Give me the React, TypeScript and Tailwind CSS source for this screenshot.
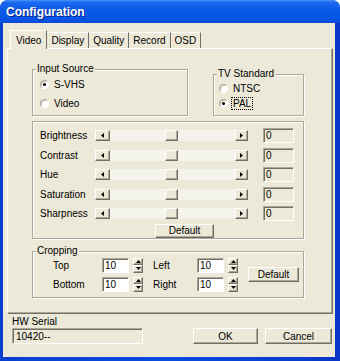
import React from 'react';

const raised =
  'border border-t-white border-l-white border-r-[#716F64] border-b-[#716F64] shadow-[inset_-1px_-1px_0_#ACA899]';
const sunken =
  'border border-t-[#ACA899] border-l-[#ACA899] border-r-white border-b-white shadow-[inset_1px_1px_0_#716F64]';

const Tri: React.FC<{ dir: 'left' | 'right' | 'up' | 'down' }> = ({ dir }) => {
  const pts = {
    left: '3,0 3,5 0,2.5',
    right: '0,0 0,5 3,2.5',
    up: '0,3 5,3 2.5,0',
    down: '0,0 5,0 2.5,3',
  }[dir];
  const horiz = dir === 'left' || dir === 'right';
  return (
    <svg width={horiz ? 3 : 5} height={horiz ? 5 : 3} viewBox={horiz ? '0 0 3 5' : '0 0 5 3'}>
      <polygon points={pts} fill="#000" />
    </svg>
  );
};

const Group: React.FC<{ label?: string; className?: string; children: React.ReactNode }> = ({
  label,
  className,
  children,
}) => (
  <div
    className={`relative border border-[#ACA899] shadow-[inset_1px_1px_0_#fff,1px_1px_0_#fff] ${className ?? ''}`}
  >
    {label && (
      <span className="absolute -top-[7px] left-[3px] bg-[#ECE9D8] px-[1px] leading-[12px]">{label}</span>
    )}
    {children}
  </div>
);

const Radio: React.FC<{ checked?: boolean }> = ({ checked }) => (
  <span className="flex h-[9px] w-[9px] items-center justify-center rounded-full border border-[#ACA899] border-r-white border-b-white bg-white shadow-[inset_1px_1px_0_#c9c6b8]">
    {checked && <span className="h-[3px] w-[3px] rounded-full bg-black" />}
  </span>
);

const Button: React.FC<{ label: string; className?: string }> = ({ label, className }) => (
  <div className={`flex items-center justify-center bg-[#ECE9D8] ${raised} ${className ?? ''}`}>{label}</div>
);

const Slider: React.FC = () => (
  <div className="flex h-[11px] w-[153px] bg-[#F4F3EC]">
    <div className={`flex w-[15px] items-center justify-center bg-[#ECE9D8] ${raised}`}>
      <Tri dir="left" />
    </div>
    <div className="w-[55px]" />
    <div className={`w-[13px] bg-[#ECE9D8] ${raised}`} />
    <div className="flex-1" />
    <div className={`flex w-[13px] items-center justify-center bg-[#ECE9D8] ${raised}`}>
      <Tri dir="right" />
    </div>
  </div>
);

const Spin: React.FC = () => (
  <div className="flex h-[15px] w-[10px] flex-col">
    <div className={`flex flex-1 items-center justify-center bg-[#ECE9D8] ${raised}`}>
      <Tri dir="up" />
    </div>
    <div className={`flex flex-1 items-center justify-center bg-[#ECE9D8] ${raised}`}>
      <Tri dir="down" />
    </div>
  </div>
);

const sliders = ['Brightness', 'Contrast', 'Hue', 'Saturation', 'Sharpness'];
const tabs = ['Video', 'Display', 'Quality', 'Record', 'OSD'];

const CropRow: React.FC<{ a: string; b: string }> = ({ a, b }) => (
  <div className="flex h-[19px] items-center">
    <span className="w-[49px]">{a}</span>
    <div className={`flex h-[15px] w-[27px] items-center bg-white pl-[2px] ${sunken}`}>10</div>
    <div className="ml-[4px]">
      <Spin />
    </div>
    <span className="ml-[10px] w-[44px]">{b}</span>
    <div className={`flex h-[15px] w-[27px] items-center bg-white pl-[2px] ${sunken}`}>10</div>
    <div className="ml-[4px]">
      <Spin />
    </div>
  </div>
);

export default function App() {
  return (
    <div className="h-[361px] w-[340px] bg-white font-['Liberation_Sans',Arial,sans-serif] text-[10px] text-black">
      <div className="flex h-full w-full flex-col overflow-hidden rounded-t-[8px] bg-[linear-gradient(to_right,#0A3FD0,#0B4BE0_50%,#0836C8)]">
        {/* title bar */}
        <div className="flex h-[23px] shrink-0 items-center bg-[linear-gradient(to_bottom,#4A94FF_0%,#1C68F0_10%,#0A5AE8_45%,#0656E6_80%,#0B4AD4_100%)] pl-[6px]">
          <span className="text-[12px] font-bold text-white [text-shadow:1px_1px_0_#0A1E8A]">Configuration</span>
        </div>

        {/* body */}
        <div className="mb-[4px] ml-[3px] mr-[5px] flex flex-1 flex-col bg-[#ECE9D8]">
          {/* tabs */}
          <div className="flex h-[25px] items-end pl-[7px] pt-[7px]">
            {tabs.map((t, i) =>
              i === 0 ? (
                <div
                  key={t}
                  className="relative z-10 -mb-px flex h-[19px] items-center border-l border-t border-r border-l-white border-t-white border-r-[#716F64] bg-[#ECE9D8] px-[5px]"
                >
                  {t}
                </div>
              ) : (
                <div
                  key={t}
                  className="flex h-[16px] items-center border-t border-r border-t-white border-r-[#716F64] px-[4px]"
                >
                  {t}
                </div>
              ),
            )}
          </div>

          {/* tab pane */}
          <div className="ml-[4px] mr-[2px] h-[266px] border border-t-white border-l-white border-r-[#716F64] border-b-[#716F64] shadow-[inset_-1px_-1px_0_#ACA899] pl-[24px]">
            <div className="flex items-start">
              <Group label="Input Source" className="mt-[20px] h-[47px] w-[156px] pl-[7px] pt-[5px]">
                <div className="flex h-[19px] items-center gap-[5px]">
                  <Radio checked />
                  <span>S-VHS</span>
                </div>
                <div className="flex h-[19px] items-center gap-[5px]">
                  <Radio />
                  <span>Video</span>
                </div>
              </Group>
              <Group label="TV Standard" className="ml-[25px] mt-[25px] h-[42px] w-[91px] pl-[5px] pt-[6px]">
                <div className="flex h-[15px] items-center gap-[5px]">
                  <Radio />
                  <span>NTSC</span>
                </div>
                <div className="flex h-[15px] items-center gap-[3px]">
                  <Radio checked />
                  <span className="border border-dotted border-black px-[1px] leading-[11px]">PAL</span>
                </div>
              </Group>
            </div>

            <Group className="mt-[5px] h-[118px] w-[272px] pl-[7px] pt-[4px]">
              {sliders.map((s) => (
                <div key={s} className="flex h-[19.5px] items-center">
                  <span className="w-[55px]">{s}</span>
                  <Slider />
                  <div className={`ml-[15px] flex h-[15px] w-[31px] items-center bg-[#ECE9D8] pl-[2px] ${sunken}`}>
                    0
                  </div>
                </div>
              ))}
              <Button label="Default" className="ml-[115px] h-[14px] w-[59px]" />
            </Group>

            <Group label="Cropping" className="mt-[12px] flex h-[47px] w-[272px] items-center pl-[20px]">
              <div className="flex flex-col">
                <CropRow a="Top" b="Left" />
                <CropRow a="Bottom" b="Right" />
              </div>
              <Button label="Default" className="ml-[10px] h-[15px] w-[51px]" />
            </Group>
          </div>

          {/* bottom */}
          <div className="flex items-end pl-[9px] pr-[3px]">
            <div className="flex flex-col">
              <span className="mt-[2px] h-[12px] leading-[12px]">HW Serial</span>
              <div className={`flex h-[16px] w-[131px] items-center bg-[#ECE9D8] pl-[3px] ${sunken}`}>10420--</div>
            </div>
            <div className="ml-auto flex gap-[7px]">
              <Button label="OK" className="h-[16px] w-[65px]" />
              <Button label="Cancel" className="h-[16px] w-[67px]" />
            </div>
          </div>
        </div>
      </div>
    </div>
  );
}
